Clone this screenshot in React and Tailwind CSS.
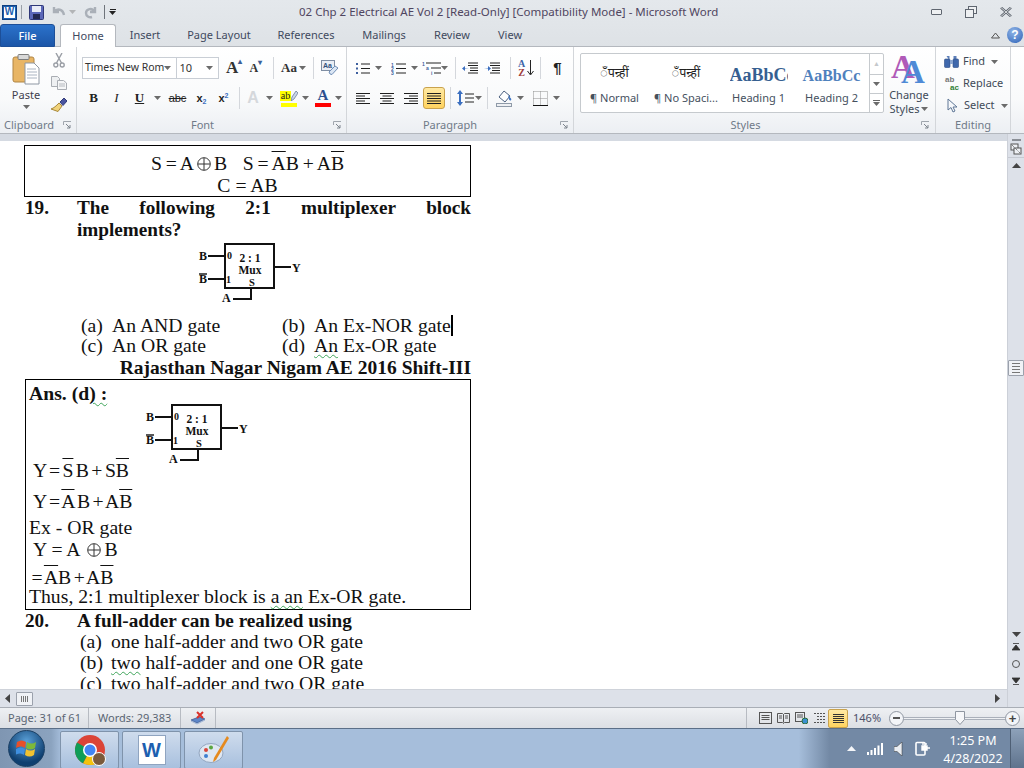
import React from 'react'

const Caret = ({ className = '' }) => (
  <svg width="7" height="4" viewBox="0 0 7 4" className={`shrink-0 ${className}`}><path d="M0 0h7L3.500 4z" fill="#6b6b6b" /></svg>
)

const Sep = () => <div className="w-px h-[22px] bg-[#d4d7dc] shrink-0" />

function Launcher() {
  return (
    <svg width="9" height="9" viewBox="0 0 9 9" className="shrink-0">
      <path d="M.5 4V.5H8M.5.5" stroke="#a0a6ae" fill="none" />
      <path d="M3 3l4 4M7 4v3H4" stroke="#7d848d" fill="none" />
    </svg>
  )
}

// lines for the paragraph buttons
function Lines({ kind }) {
  const rows = {
    left: [[1, 15], [1, 10], [1, 15], [1, 10], [1, 15]],
    center: [[1, 15], [3.5, 12.5], [1, 15], [3.5, 12.5], [1, 15]],
    right: [[1, 15], [6, 15], [1, 15], [6, 15], [1, 15]],
    justify: [[1, 15], [1, 15], [1, 15], [1, 15], [1, 15]],
  }[kind]
  return (
    <svg width="16" height="13" viewBox="0 0 16 13">
      {rows.map((r, i) => <path key={i} d={`M${r[0]} ${1.5 + i * 2.5}H${r[1]}`} stroke="#1f1f1f" />)}
    </svg>
  )
}

function PasteIcon() {
  return (
    <svg width="28" height="32" viewBox="0 0 28 32">
      <rect x="1" y="4" width="21" height="25" rx="2" fill="#e8b565" stroke="#b08545" />
      <rect x="6" y="1.500" width="11" height="5" rx="1" fill="#d9d9d9" stroke="#7d7d7d" />
      <path d="M13 10h9l5 5v16H13z" fill="#fff" stroke="#8e97a3" />
      <path d="M15 16h9M15 19h10M15 22h10M15 25h10" stroke="#aab4c2" />
    </svg>
  )
}

function ScissorsIcon() {
  return (
    <svg width="12" height="15" viewBox="0 0 12 15" fill="none" stroke="#9a9ea5" strokeWidth="1.400">
      <path d="M3 0l5.500 10M9 0L3.500 10" />
      <circle cx="2.800" cy="12" r="2" />
      <circle cx="9.200" cy="12" r="2" />
    </svg>
  )
}

function CopyIcon() {
  return (
    <svg width="16" height="14" viewBox="0 0 16 14">
      <path d="M.5.5h6l2 2v8h-8z" fill="#eef0f2" stroke="#a9adb3" />
      <path d="M6.500 4.500h6l3 2.500v6.500h-9z" fill="#f5f6f7" stroke="#a9adb3" />
      <path d="M8 8h6M8 10h6" stroke="#b5b9bf" />
    </svg>
  )
}

function PainterIcon() {
  return (
    <svg width="17" height="15" viewBox="0 0 17 15">
      <path d="M9 5l3 3-4 5.500-7-2.500C4 10 6 8 9 5z" fill="#f0d27a" stroke="#a8883a" />
      <path d="M10 4l4-4 3 3-4 4.500z" fill="#4a55a0" stroke="#333b78" />
    </svg>
  )
}

function ClearIcon() {
  return (
    <svg width="17" height="16" viewBox="0 0 17 16">
      <rect x=".5" y=".5" width="13" height="10" fill="#e9eef5" stroke="#7f8ea3" />
      <text x="2" y="8" fontSize="7" fontFamily="'Liberation Sans'" fontWeight="700" fill="#33517d">Aa</text>
      <path d="M8 12l6-6 3 2-6 6.500-2-.5z" fill="#dbe6f4" stroke="#6f8db5" />
    </svg>
  )
}

function Highlight() {
  return (
    <div className="w-[16px] flex flex-col items-center">
      <div className="flex h-[12px] items-center">
        <span className="bg-[#ffff00] text-[10px] leading-[10px] text-[#222] px-px">ab</span>
        <svg width="7" height="10" viewBox="0 0 7 10"><path d="M5 0l2 2-4 6-3 2 1-4z" fill="#c9d7ea" stroke="#5f6f8a" strokeWidth=".7" /></svg>
      </div>
      <div className="w-[16px] h-[4px] bg-[#ffff00] mt-[1px]" />
    </div>
  )
}

function FontColor() {
  return (
    <div className="w-[16px] flex flex-col items-center">
      <span className="font-['Liberation_Serif'] font-bold text-[15px] leading-[13px] text-[#2c4f8f]">A</span>
      <div className="w-[16px] h-[4px] bg-[#ff0000] mt-[1px]" />
    </div>
  )
}

function ListBullets() {
  return (
    <svg width="14" height="13" viewBox="0 0 14 13">
      <path d="M0 1h2v2H0zM0 5.500h2v2H0zM0 10h2v2H0z" fill="#3d5f9e" />
      <path d="M5 2h9M5 6.500h9M5 11h9" stroke="#222" />
    </svg>
  )
}

function ListNumbers() {
  const t = { fontSize: 5, fontWeight: 700, fill: '#3d5f9e', fontFamily: "'Liberation Sans'" }
  return (
    <svg width="15" height="13" viewBox="0 0 15 13">
      <text x="0" y="4.500" {...t}>1</text>
      <text x="0" y="8.700" {...t}>2</text>
      <text x="0" y="13" {...t}>3</text>
      <path d="M5 2h10M5 6.500h10M5 11h10" stroke="#222" />
    </svg>
  )
}

function ListMulti() {
  const t = { fontSize: 5, fontWeight: 700, fill: '#3d5f9e', fontFamily: "'Liberation Sans'" }
  return (
    <svg width="19" height="14" viewBox="0 0 19 14">
      <text x="0" y="4.500" {...t}>1</text>
      <text x="4" y="9" {...t}>a</text>
      <text x="9" y="14" {...t}>i</text>
      <path d="M4 2h15M9 7h10M12 12h7" stroke="#222" />
    </svg>
  )
}

function Indent({ flip }) {
  return (
    <svg width="16" height="13" viewBox="0 0 16 13">
      <path d="M6 1h10M6 3.500h10M8 6h8M8 8.500h8M6 11h10" stroke="#1f1f1f" />
      {flip
        ? <path d="M0 6.500h4V4l3 2.500L4 9V7z" fill="#3b6fc0" />
        : <path d="M7 6.500H3V4L0 6.500 3 9V7z" fill="#3b6fc0" />}
    </svg>
  )
}

function SortIcon() {
  return (
    <div className="flex items-center gap-[2px] h-[18px]">
      <div className="flex flex-col items-center font-['Liberation_Serif'] font-bold text-[10px] leading-[9px]">
        <span className="text-[#3c64a8]">A</span>
        <span className="text-[#a03c3c]">Z</span>
      </div>
      <svg width="7" height="16" viewBox="0 0 7 16"><path d="M3.500 0v14M.5 11l3 4 3-4" stroke="#222" fill="none" /></svg>
    </div>
  )
}

function LineSpacing() {
  return (
    <svg width="17" height="16" viewBox="0 0 17 16">
      <path d="M3 0l3 4H4v8h2l-3 4-3-4h2V4H0z" fill="#3b6fc0" />
      <path d="M8 4h9M8 8h9M8 12h9" stroke="#222" />
    </svg>
  )
}

function Shading() {
  return (
    <svg width="17" height="17" viewBox="0 0 17 17">
      <path d="M3 7l5-6 6 5-5 6z" fill="#fff" stroke="#4d6180" />
      <path d="M12 5l3 3.500c1 2 -1 3 -2 1z" fill="#3f75c4" />
      <rect x=".5" y="13.500" width="15" height="3" fill="#eef0f3" stroke="#8f9aa8" />
    </svg>
  )
}

function Borders() {
  return (
    <svg width="15" height="15" viewBox="0 0 15 15" fill="none">
      <path d="M.5 .5h14M.5 7.500h14M.5 .5v14M14.500 .5v14M7.500 .5v14" stroke="#8f8f8f" strokeDasharray="1 1" />
      <path d="M0 14.500h15" stroke="#111" />
    </svg>
  )
}

function ChangeStyles() {
  return (
    <svg width="38" height="31" viewBox="0 0 38 31">
      <text x="1" y="25" fontSize="33" fontFamily="'Liberation Serif'" fontWeight="700" fill="#b05ab8">A</text>
      <text x="11" y="30" fontSize="33" fontFamily="'Liberation Serif'" fontWeight="700" fill="#4f8ad6">A</text>
    </svg>
  )
}

function Binoculars() {
  return (
    <svg width="15" height="13" viewBox="0 0 15 13">
      <path d="M2.500 1h3v3h-1zM9.500 1h3l0 3h-3z" fill="#5d7fb8" />
      <rect x="0.500" y="4" width="5.500" height="8.500" rx="1" fill="#3f68ac" stroke="#2c4c85" strokeWidth=".6" />
      <rect x="9" y="4" width="5.500" height="8.500" rx="1" fill="#3f68ac" stroke="#2c4c85" strokeWidth=".6" />
      <rect x="6" y="5" width="3" height="4" fill="#8ba6d0" />
    </svg>
  )
}

function ReplaceIcon() {
  return (
    <div className="w-[16px] h-[16px] flex flex-col font-['Liberation_Sans'] font-bold text-[8px] leading-[8px]">
      <span className="text-[#777] ml-px">ab</span>
      <span className="text-[#2f7f34] ml-[6px]">ac</span>
    </div>
  )
}

function Arrow() {
  return (
    <svg width="11" height="15" viewBox="0 0 11 15"><path d="M1 1v11l3-2.500 2 4.500 2-1-2-4h4z" fill="#f6f8fb" stroke="#5f7796" /></svg>
  )
}

function StyleCard({ children, label, w }) {
  return (
    <div className={`flex flex-col items-center justify-between h-[52px] pt-[5px] pb-[3px] overflow-hidden shrink-0 ${w}`}>
      <div className="h-[24px] flex items-center">{children}</div>
      <span className="text-[11px] leading-[14px] text-[#45505e] whitespace-nowrap">{label}</span>
    </div>
  )
}

function Ribbon() {
  return (
    <div className="h-[87px] flex bg-[linear-gradient(#ffffff,#f9fafb_60%,#eceff3)] border-b border-[#b4b8be] text-[#444]">
      {/* Clipboard */}
      <div className="w-[77px] border-r border-[#d3d6da] flex flex-col">
        <div className="h-[71px] flex pt-[6px]">
          <div className="w-[50px] flex flex-col items-center pl-[2px]">
            <PasteIcon />
            <span className="text-[11px] leading-[14px] mt-[3px] text-[#3f3f4f]">Paste</span>
            <Caret className="mt-[3px]" />
          </div>
          <div className="flex flex-col items-center gap-[8px] w-[17px]">
            <ScissorsIcon />
            <CopyIcon />
            <PainterIcon />
          </div>
        </div>
        <div className="flex items-center pl-[4px] pr-[4px] justify-between text-[11px] text-[#6f7a88] h-[15px]">
          <span>Clipboard</span><Launcher />
        </div>
      </div>

      {/* Font */}
      <div className="w-[270px] border-r border-[#d3d6da] flex flex-col">
        <div className="h-[71px] pl-[5px] pt-[10px] flex flex-col">
          <div className="flex items-center h-[22px]">
            <div className="w-[98px] h-[22px] border border-[#c9ced5] bg-white flex items-center justify-between pl-[2px] pr-[5px] text-[10.500px] text-[#333] overflow-hidden">
              <span className="whitespace-nowrap">Times New Rom</span><Caret />
            </div>
            <div className="w-[43px] h-[22px] border border-l-0 border-[#c9ced5] bg-white flex items-center justify-between pl-[2px] pr-[5px] text-[11px] text-[#333]">
              <span>10</span><Caret />
            </div>
            <div className="w-[24px] flex justify-center ml-[3px] font-['Liberation_Serif'] font-bold text-[17px] leading-[20px] text-[#333]">A<span className="text-[8px] text-[#3b5f98] leading-[8px]">▴</span></div>
            <div className="w-[21px] flex justify-center font-['Liberation_Serif'] font-bold text-[12px] text-[#333]">A<span className="text-[8px] text-[#3b5f98] leading-[8px]">▾</span></div>
            <div className="ml-[7px]"><Sep /></div>
            <div className="w-[40px] flex justify-center items-center gap-[2px] font-['Liberation_Serif'] font-bold text-[13px] text-[#333]">Aa<Caret /></div>
            <Sep />
            <div className="w-[33px] flex justify-center"><ClearIcon /></div>
          </div>
          <div className="flex items-center h-[22px] mt-[8px] font-['Liberation_Serif'] text-[13px] text-[#222]">
            <div className="w-[23px] flex justify-center font-bold">B</div>
            <div className="w-[23px] flex justify-center italic">I</div>
            <div className="w-[23px] flex justify-center font-bold underline">U</div>
            <Caret className="mx-[3px]" />
            <div className="w-[27px] flex justify-center font-['Liberation_Sans'] text-[11px] line-through">abc</div>
            <div className="w-[21px] text-center font-['Liberation_Sans'] font-bold text-[11px]"><span>x<sub className="text-[7px] text-[#3b6fc0]">2</sub></span></div>
            <div className="w-[23px] text-center font-['Liberation_Sans'] font-bold text-[11px]"><span>x<sup className="text-[7px] text-[#3b6fc0]">2</sup></span></div>
            <div className="ml-[4px]"><Sep /></div>
            <div className="w-[26px] flex justify-center font-['Liberation_Sans'] font-bold text-[16px] text-[#d5d8dc]">A</div>
            <Caret className="mr-[8px]" />
            <Highlight />
            <Caret className="mx-[5px]" />
            <div className="ml-[1px]"><FontColor /></div>
            <Caret className="ml-[4px]" />
          </div>
        </div>
        <div className="flex items-center justify-center relative text-[11px] text-[#6f7a88] h-[15px] pr-[18px]">
          <span>Font</span>
          <span className="absolute right-[4px]"><Launcher /></span>
        </div>
      </div>

      {/* Paragraph */}
      <div className="w-[227px] border-r border-[#d3d6da] flex flex-col">
        <div className="h-[71px] pl-[9px] pt-[10px] flex flex-col">
          <div className="flex items-center h-[22px]">
            <ListBullets /><Caret className="ml-[5px]" />
            <div className="ml-[9px]"><ListNumbers /></div><Caret className="ml-[5px]" />
            <div className="ml-[4px]"><ListMulti /></div><Caret />
            <div className="ml-[7px]"><Sep /></div>
            <div className="ml-[6px]"><Indent /></div>
            <div className="ml-[6px]"><Indent flip /></div>
            <div className="ml-[10px]"><Sep /></div>
            <div className="ml-[7px]"><SortIcon /></div>
            <div className="ml-[6px]"><Sep /></div>
            <div className="ml-[12px] font-['Liberation_Sans'] font-bold text-[15px] text-[#222]">¶</div>
          </div>
          <div className="flex items-center h-[22px] mt-[8px]">
            <div className="ml-[-1px]"><Lines kind="left" /></div>
            <div className="ml-[8px]"><Lines kind="center" /></div>
            <div className="ml-[8px]"><Lines kind="right" /></div>
            <div className="ml-[4px] w-[22px] h-[22px] flex items-center justify-center bg-[linear-gradient(#ffe9a3,#ffd35f)] border border-[#c9a24d] rounded-[3px]"><Lines kind="justify" /></div>
            <div className="ml-[5px]"><Sep /></div>
            <div className="ml-[6px]"><LineSpacing /></div>
            <Caret className="ml-[1px]" />
            <div className="ml-[5px]"><Sep /></div>
            <div className="ml-[8px]"><Shading /></div>
            <Caret className="ml-[4px]" />
            <div className="ml-[9px]"><Borders /></div>
            <Caret className="ml-[5px]" />
          </div>
        </div>
        <div className="flex items-center justify-center relative text-[11px] text-[#6f7a88] h-[15px] pr-[20px]">
          <span>Paragraph</span>
          <span className="absolute right-[4px]"><Launcher /></span>
        </div>
      </div>

      {/* Styles */}
      <div className="w-[362px] border-r border-[#d3d6da] flex flex-col">
        <div className="h-[71px] flex pl-[6px] pt-[6px]">
          <div className="h-[60px] w-[304px] flex border border-[#c6cace] rounded-[2px] bg-white shrink-0">
            <div className="flex-1 flex pt-[2px] overflow-hidden">
              <StyleCard label="¶ Normal" w="w-[67px]"><span className="text-[12.500px] text-[#222]">ँपन्र्हीं</span></StyleCard>
              <StyleCard label="¶ No Spaci..." w="w-[76px]"><span className="text-[12.500px] text-[#222]">ँपन्र्हीं</span></StyleCard>
              <StyleCard label="Heading 1" w="w-[69px]"><span className="font-['Liberation_Serif'] font-bold text-[18px] text-[#365f91] whitespace-nowrap w-[58px] overflow-hidden mt-[5px]">AaBbCc</span></StyleCard>
              <StyleCard label="Heading 2" w="w-[77px]"><span className="font-['Liberation_Serif'] font-bold text-[16px] text-[#4f81bd] whitespace-nowrap mt-[5px]">AaBbCc</span></StyleCard>
            </div>
            <div className="w-[14px] border-l border-[#c6cace] flex flex-col">
              <div className="h-[20px] flex items-center justify-center text-[#c5c8cc] text-[7px]">▲</div>
              <div className="h-[20px] flex items-center justify-center border-y border-[#c6cace]"><Caret /></div>
              <div className="flex-1 flex flex-col items-center justify-center gap-px"><div className="w-[7px] h-px bg-[#666]" /><Caret /></div>
            </div>
          </div>
          <div className="w-[50px] flex flex-col items-center">
            <ChangeStyles />
            <span className="text-[11px] leading-[14px] mt-[4px] text-[#3f4a58]">Change</span>
            <span className="text-[11px] leading-[13px] text-[#3f4a58] flex items-center gap-[2px]">Styles<Caret /></span>
          </div>
        </div>
        <div className="flex items-center justify-center relative text-[11px] text-[#6f7a88] h-[15px] pr-[18px]">
          <span>Styles</span>
          <span className="absolute right-[5px]"><Launcher /></span>
        </div>
      </div>

      {/* Editing */}
      <div className="w-[75px] border-r border-[#d3d6da] flex flex-col">
        <div className="h-[71px] flex flex-col pl-[8px] pt-[6px] text-[11px] text-[#3f4a58] gap-[5px]">
          <div className="h-[17px] flex items-center gap-[4px]"><Binoculars /><span>Find</span><Caret className="ml-[2px]" /></div>
          <div className="h-[17px] flex items-center gap-[3px]"><ReplaceIcon /><span>Replace</span></div>
          <div className="h-[17px] flex items-center gap-[6px] pl-[3px]"><Arrow /><span>Select</span><Caret /></div>
        </div>
        <div className="flex items-center justify-center text-[11px] text-[#6f7a88] h-[15px]">Editing</div>
      </div>
    </div>
  )
}

const Tab = ({ children, w }) => (
  <div className={`text-[11px] text-[#3f4a5e] flex items-center justify-center pt-px ${w}`}>{children}</div>
)

function TitleBar() {
  return (
    <div className="h-[24px] flex items-center">
      <div className="w-[15px] h-[15px] ml-[2px] bg-[#1d5fb0] border border-[#0e3f80] flex items-center justify-center">
        <span className="bg-white w-[11px] h-[11px] flex items-center justify-center font-['Liberation_Sans'] font-bold text-[10px] leading-none text-[#1d5fb0]">W</span>
      </div>
      <div className="w-px h-[14px] bg-[#9aa0a8] ml-[4px]" />
      <svg width="15" height="15" viewBox="0 0 15 15" className="ml-[7px]">
        <rect x=".5" y=".5" width="14" height="14" rx="1" fill="#5b67b8" stroke="#2f3878" />
        <rect x="3" y="1" width="9" height="6" fill="#e9ecf7" />
        <rect x="4" y="9" width="7" height="5" fill="#23284f" />
      </svg>
      <svg width="15" height="14" viewBox="0 0 15 14" fill="none" className="ml-[7px]">
        <path d="M3 2v5h5M3 7c3-4 9-3 10 3" stroke="#aab0b8" strokeWidth="2.400" />
      </svg>
      <Caret className="ml-[3px] opacity-40" />
      <svg width="14" height="14" viewBox="0 0 14 14" fill="none" className="ml-[8px]">
        <path d="M11 2v5H6M11 7C8 2 2 4 2 8c0 3 3 5 6 4" stroke="#aab0b8" strokeWidth="2.400" />
      </svg>
      <div className="w-px h-[14px] bg-[#6f747b] ml-[6px]" />
      <div className="ml-[4px] flex flex-col items-center gap-[1px]"><div className="w-[6px] h-px bg-[#222]" /><svg width="7" height="4" viewBox="0 0 7 4"><path d="M0 0h7L3.500 4z" fill="#222" /></svg></div>
      <div className="ml-[183px] text-[11.500px] text-[#4f4560] whitespace-nowrap w-[424px]">02 Chp 2 Electrical AE Vol 2 [Read-Only] [Compatibility Mode]  -  Microsoft Word</div>
      <div className="ml-auto flex items-center">
        <div className="w-[11px] h-[6px] rounded-[1px] border border-[#5f6670] bg-[#eef0f2] mr-[23px]" />
        <svg width="12" height="12" viewBox="0 0 12 12" fill="#eef0f2" stroke="#5f6670" className="mr-[23px]">
          <rect x="3.500" y=".5" width="8" height="7" /><rect x=".5" y="3.500" width="8" height="8" />
        </svg>
        <svg width="12" height="10" viewBox="0 0 12 10" className="mr-[12px]" fill="none">
          <path d="M1 .5l10 9M11 .5l-10 9" stroke="#5f6670" strokeWidth="2.400" />
          <path d="M1 .5l10 9M11 .5l-10 9" stroke="#f4f5f6" strokeWidth=".8" />
        </svg>
      </div>
    </div>
  )
}

function TabsRow() {
  return (
    <div className="h-[23px] flex border-b border-[#b4b8be]">
      <div className="w-[55px] h-[23px] rounded-t-[3px] bg-[linear-gradient(#2b72cb,#1c56a8)] border border-[#1d4f98] text-white text-[11px] font-medium flex items-center justify-center pt-px">File</div>
      <div className="ml-[5px] w-[56px] h-[23px] bg-white border border-b-0 border-[#b4b8be] rounded-t-[3px] text-[11px] text-[#3f4a5e] flex items-center justify-center pt-px relative z-10">Home</div>
      <Tab w="w-[58px]">Insert</Tab>
      <Tab w="w-[86px] ml-[2px]">Page Layout</Tab>
      <Tab w="w-[80px] ml-[4px]">References</Tab>
      <Tab w="w-[76px]">Mailings</Tab>
      <Tab w="w-[60px]">Review</Tab>
      <Tab w="w-[56px]">View</Tab>
      <div className="ml-auto flex items-center pr-[1px]">
        <svg width="9" height="7" viewBox="0 0 9 7" fill="none" className="mr-[7px]"><path d="M.5 6L4.500 1l4 5z" stroke="#555" /></svg>
        <div className="w-[16px] h-[16px] rounded-full bg-[radial-gradient(circle_at_40%_30%,#8fb4e6,#2d62b8)] text-white font-['Liberation_Sans'] font-bold text-[12px] flex items-center justify-center">?</div>
      </div>
    </div>
  )
}

function Bar({ children }) {
  return <span className="overline decoration-1">{children}</span>
}

function Squiggle({ children }) {
  return <span className="underline decoration-wavy decoration-1 decoration-[#3fa55a] underline-offset-2">{children}</span>
}

function Xor() {
  return (
    <svg width="14" height="14" viewBox="0 0 14 14" className="inline-block mx-[3px] align-[-1px]" fill="none" stroke="#333">
      <circle cx="7" cy="7" r="6.300" /><path d="M7 1v12M1 7h12" />
    </svg>
  )
}

function Mux() {
  const t = { fontFamily: "'Liberation Serif'", fontWeight: 700, fill: '#111' }
  return (
    <svg width="106" height="62" viewBox="0 0 106 62" className="block">
      <rect x="28" y="3" width="49" height="44" fill="#fff" stroke="#111" strokeWidth="2" />
      <path d="M11 15h17M11 38h17M77 26h17M54 47v11H36" stroke="#111" strokeWidth="2" fill="none" />
      <text x="2" y="19" fontSize="12" {...t}>B</text>
      <text x="2" y="42" fontSize="12" {...t}>B</text>
      <path d="M2 33h8" stroke="#111" strokeWidth="1.400" />
      <text x="95" y="31" fontSize="12" {...t}>Y</text>
      <text x="30" y="18" fontSize="10" {...t}>0</text>
      <text x="29" y="42" fontSize="10" {...t}>1</text>
      <text x="53" y="21" fontSize="11.500" textAnchor="middle" {...t}>2 : 1</text>
      <text x="53" y="33" fontSize="11.500" textAnchor="middle" {...t}>Mux</text>
      <text x="55" y="45" fontSize="10.500" textAnchor="middle" {...t}>S</text>
      <text x="25" y="61" fontSize="12" {...t}>A</text>
    </svg>
  )
}

const Row = ({ className = '', children }) => (
  <div className={`flex items-center whitespace-nowrap ${className}`}>{children}</div>
)

// a run of text on one line, spaces kept as they are
const Line = ({ className = '', children }) => (
  <div className={`whitespace-pre ${className}`}>{children}</div>
)

function Option({ tag, children, className = '' }) {
  return (
    <Row className={`h-[21px] ${className}`}>
      <span className="w-[31px] ml-[56px]">{tag}</span>
      <span>{children}</span>
    </Row>
  )
}

function Page() {
  return (
    <div className="w-[447px] ml-[24px] pt-[4px] font-['Liberation_Serif',serif] text-[19.700px] text-[#111]">
      <div className="h-[52px] border border-black flex flex-col items-center pt-[6px]">
        <Line className="h-[22px] leading-[22px] [word-spacing:-1px]">S = A<Xor />B    S = <Bar>A</Bar>B + A<Bar>B</Bar></Line>
        <Line className="h-[22px] leading-[22px]">C = AB</Line>
      </div>
      <div className="font-bold text-[19.200px]">
        <Row className="h-[22px]">
          <span className="w-[53px] pl-px">19.</span>
          <span className="flex-1 flex justify-between"><span>The</span><span>following</span><span>2:1</span><span>multiplexer</span><span>block</span></span>
        </Row>
        <Row className="h-[22px] pl-[53px]">implements?</Row>
      </div>
      <div className="h-[73px] pl-[173px]"><Mux /></div>
      <Row className="h-[21px] mt-px">
        <span className="w-[31px] ml-[57px]">(a)</span>
        <span className="w-[170px]">An AND gate</span>
        <span className="w-[32px]">(b)</span>
        <span className="border-r-2 border-black h-[21px] leading-[21px]">An Ex-NOR gate</span>
      </Row>
      <Row className="h-[21px] -mt-px">
        <span className="w-[31px] ml-[57px]">(c)</span>
        <span className="w-[170px]">An OR gate</span>
        <span className="w-[32px]">(d)</span>
        <span><Squiggle>An</Squiggle> Ex-OR gate</span>
      </Row>
      <Row className="h-[22px] mt-px justify-end font-bold text-[19.500px]">Rajasthan Nagar Nigam AE 2016 Shift-III</Row>

      <div className="h-[231px] border border-black ml-px pl-[3px]">
        <Line className="h-[26px] leading-[26px] font-bold">Ans. (d<Squiggle>) :</Squiggle></Line>
        <div className="h-[57px] pl-[115px]"><div className="-mt-[4px]"><Mux /></div></div>
        <Line className="h-[22px] leading-[22px] pl-[4px] [word-spacing:-2.500px]">Y = <Bar>S</Bar> B + S<Bar>B</Bar></Line>
        <Line className="h-[22px] leading-[22px] pl-[4px] mt-[9px] [word-spacing:-2.500px]">Y = <Bar>A</Bar> B + A<Bar>B</Bar></Line>
        <Line className="h-[22px] leading-[22px] mt-[4px]">Ex - OR gate</Line>
        <Line className="h-[22px] leading-[22px] pl-[4px]">Y = A <Xor />B</Line>
        <Line className="h-[22px] leading-[22px] mt-[6px] [word-spacing:-2.500px]"> = <Bar>A</Bar>B + A<Bar>B</Bar></Line>
        <Line className="h-[20px] leading-[20px] -mt-[2px]">Thus, 2:1 multiplexer block is <Squiggle>a an</Squiggle> Ex-OR gate.</Line>
      </div>

      <Row className="h-[22px] font-bold text-[19.200px]">
        <span className="w-[53px] pl-px">20.</span>
        <span>A full-adder can be realized using</span>
      </Row>
      <Option tag="(a)" className="-mt-px">one half-adder and two OR gate</Option>
      <Option tag="(b)"><Squiggle>two</Squiggle> half-adder and one OR gate</Option>
      <Option tag="(c)">two half-adder and two OR gate</Option>
    </div>
  )
}

function VScroll() {
  return (
    <div className="w-[17px] bg-[#dde1e9] flex flex-col items-center border-l border-[#ccd0d8]">
      <div className="w-[9px] h-[2px] bg-[#8b8f96] mt-[5px]" />
      <svg width="12" height="12" viewBox="0 0 12 12" fill="#eef0f4" stroke="#555" className="mt-[2px]">
        <rect x="1" y="1" width="7" height="6" /><rect x="4" y="5" width="7" height="6" />
        <path d="M2 2l8 8" strokeDasharray="1 1" />
      </svg>
      <div className="w-full h-px bg-[#c6cad2] mt-[2px]" />
      <svg width="9" height="5" viewBox="0 0 9 5" className="mt-[5px]"><path d="M0 5L4.500 0 9 5z" fill="#444" /></svg>
      <div className="w-[16px] h-[16px] mt-[192px] bg-[#f0f2f6] border border-[#9ba1ac] rounded-[1px] flex flex-col items-center justify-center gap-[2px]">
        <div className="w-[8px] h-px bg-[#777]" /><div className="w-[8px] h-px bg-[#777]" /><div className="w-[8px] h-px bg-[#777]" /><div className="w-[8px] h-px bg-[#777]" />
      </div>
      <svg width="9" height="5" viewBox="0 0 9 5" className="mt-auto mb-[6px]"><path d="M0 0L4.500 5 9 0z" fill="#444" /></svg>
      <svg width="8" height="8" viewBox="0 0 8 8" className="mb-[9px]"><path d="M1 .5h6M0 7l4-5 4 5z" stroke="#333" fill="#333" strokeWidth=".8" /></svg>
      <div className="w-[8px] h-[8px] rounded-full border border-[#555] mb-[9px]" />
      <svg width="8" height="8" viewBox="0 0 8 8" className="mb-[22px]"><path d="M1 7.500h6M0 1l4 5 4-5z" stroke="#333" fill="#333" strokeWidth=".8" /></svg>
    </div>
  )
}

function HScroll() {
  return (
    <div className="h-[18px] w-[1007px] bg-[#dde1e9] flex items-center border-t border-[#cfd3da] pl-[5px]">
      <svg width="6" height="9" viewBox="0 0 6 9"><path d="M5 0L0 4.500 5 9z" fill="#444" /></svg>
      <div className="w-[17px] h-[14px] ml-[5px] bg-[#f0f2f6] border border-[#9ba1ac] rounded-[1px] flex items-center justify-center gap-[1px]">
        <div className="w-px h-[6px] bg-[#777]" /><div className="w-px h-[6px] bg-[#777]" /><div className="w-px h-[6px] bg-[#777]" /><div className="w-px h-[6px] bg-[#777]" />
      </div>
      <svg width="6" height="9" viewBox="0 0 6 9" className="ml-auto mr-[6px]"><path d="M0 0l5 4.500L0 9z" fill="#444" /></svg>
    </div>
  )
}

function ViewIcon({ kind }) {
  return (
    <svg width="13" height="12" viewBox="0 0 13 12" fill="none" stroke="#555">
      {kind === 'print' && <><rect x=".5" y=".5" width="12" height="11" /><path d="M2.500 3.500h8M2.500 5.500h8M2.500 7.500h8" /></>}
      {kind === 'read' && <path d="M.5 1.500h5l1 1 1-1h5v9h-5l-1 1-1-1h-5zM6.500 2.500v8M2 4h3M2 6h3M8 4h3M8 6h3" />}
      {kind === 'web' && <><rect x=".5" y=".5" width="9" height="9" /><path d="M2 3h6M2 5h6" /><circle cx="10" cy="9" r="3" fill="#3a8fd0" stroke="#2f6f3a" /></>}
      {kind === 'outline' && <path d="M1 1.500h11M4 4.500h8M4 7.500h8M1 10.500h11" strokeDasharray="2 1" />}
    </svg>
  )
}

function StatusBar() {
  return (
    <div className="h-[21px] flex items-center bg-[linear-gradient(#eef0f3,#dcdfe4)] border-t border-[#a9aeb6] text-[11px] text-[#5a6573]">
      <span className="w-[89px] h-full border-r border-[#b7bbc2] pl-[8px] flex items-center">Page: 31 of 61</span>
      <span className="w-[92px] h-full border-r border-[#b7bbc2] pl-[9px] flex items-center">Words: 29,383</span>
      <div className="w-[35px] h-full border-r border-[#b7bbc2] flex items-center justify-center">
        <svg width="16" height="15" viewBox="0 0 16 15">
          <path d="M1 9l8-3 6 2-8 4z" fill="#5e86c8" stroke="#2f4f88" strokeWidth=".7" />
          <path d="M1 10l6 3 8-4" fill="none" stroke="#9fb4d6" />
          <path d="M7 1l6 6M13 1L7 7" stroke="#d9302a" strokeWidth="2" />
        </svg>
      </div>
      <div className="ml-[530px] w-px h-full bg-[#b7bbc2]" />
      <div className="w-[9px]" />
      <div className="w-[18px] flex justify-center"><ViewIcon kind="print" /></div>
      <div className="w-[18px] flex justify-center"><ViewIcon kind="read" /></div>
      <div className="w-[18px] flex justify-center"><ViewIcon kind="web" /></div>
      <div className="w-[18px] flex justify-center"><ViewIcon kind="outline" /></div>
      <div className="w-[20px] h-[19px] bg-[linear-gradient(#ffe9a3,#ffd35f)] border border-[#c9a24d] rounded-[2px] flex items-center justify-center">
        <div className="flex flex-col gap-[1px]">
          <div className="w-[11px] h-px bg-[#333]" /><div className="w-[11px] h-px bg-[#333]" /><div className="w-[11px] h-px bg-[#333]" /><div className="w-[11px] h-px bg-[#333]" /><div className="w-[11px] h-px bg-[#333]" />
        </div>
      </div>
      <span className="ml-[5px] w-[27px] text-[#4c4f68]">146%</span>
      <div className="ml-[9px] w-[15px] h-[15px] rounded-full border border-[#8f96a1] bg-[#f3f5f8] flex items-center justify-center"><div className="w-[7px] h-[2px] bg-[#555]" /></div>
      <div className="w-[101px] h-[3px] flex items-center border-y border-[#aab0ba] bg-[#eef0f3] justify-center pl-[10px]">
        <svg width="10" height="14" viewBox="0 0 10 14" className="overflow-visible"><path d="M.5 .5h9v8L5 13.500.5 8.500z" fill="#f6f7f9" stroke="#8f96a1" /></svg>
      </div>
      <div className="w-[15px] h-[15px] rounded-full border border-[#8f96a1] bg-[#f3f5f8] flex items-center justify-center text-[#444] font-bold font-['Liberation_Sans'] text-[13px] leading-none">+</div>
    </div>
  )
}

function TaskButton({ children }) {
  return (
    <div className="w-[59px] h-[38px] mt-[2px] bg-[linear-gradient(#cfdced,#a8c0de)] border border-[#7f93ab] rounded-[2px] flex items-center justify-center">
      {children}
    </div>
  )
}

function Taskbar() {
  return (
    <div className="h-[40px] flex items-start border-t border-[#5b6f88] bg-[linear-gradient(90deg,#7f96b2_0,#8ba3bf_5%,#a6bedb_6%,#a6bedb_78%,#7389a5_81%,#7389a5_100%)]">
      <div className="w-[60px] h-full flex items-center pl-[8px]">
        <div className="w-[37px] h-[37px] rounded-full bg-[radial-gradient(circle_at_50%_30%,#5aa0d8,#0f3f70_70%)] border border-[#1c4064] flex items-center justify-center">
          <svg width="21" height="19" viewBox="0 0 21 19">
            <path d="M1 3c3-2 6-2 9 0l-1 6C6 7 4 7 0 9z" fill="#e8502a" />
            <path d="M11 3c3 2 6 2 9 0l-1 6c-3 2-6 2-9 0z" fill="#7db93a" />
            <path d="M0 10c3-2 6-2 9 0l-1 6c-3-2-5-2-9 0z" fill="#3f8fe0" />
            <path d="M10 10c3 2 6 2 9 0l-1 6c-3 2-6 2-9 0z" fill="#f2c230" />
          </svg>
        </div>
      </div>
      <div className="flex gap-[3px]">
        <TaskButton>
          <svg width="32" height="32" viewBox="0 0 32 32">
            <circle cx="16" cy="16" r="15" fill="#db4437" />
            <path d="M16 16L29 23.500A15 15 0 0 1 9 29.300z" fill="#f4c20d" />
            <path d="M16 16L9 29.300A15 15 0 0 1 3 8.500z" fill="#0f9d58" />
            <circle cx="16" cy="16" r="7" fill="#fff" /><circle cx="16" cy="16" r="5.500" fill="#4285f4" />
            <circle cx="25" cy="25" r="6.500" fill="#7a5a3c" stroke="#fff" />
          </svg>
        </TaskButton>
        <TaskButton>
          <div className="w-[28px] h-[30px] bg-white border border-[#8fa4c0] flex items-center justify-center">
            <span className="font-['Liberation_Sans'] font-bold text-[20px] leading-none text-[#1d5fb0]">W</span>
          </div>
        </TaskButton>
        <TaskButton>
          <svg width="32" height="30" viewBox="0 0 32 30">
            <ellipse cx="13" cy="18" rx="12" ry="9.500" fill="#dfe7f2" stroke="#93a6c0" />
            <circle cx="8" cy="15" r="2" fill="#d9453a" /><circle cx="13" cy="12.500" r="2" fill="#5aa640" /><circle cx="8" cy="21" r="2" fill="#3f7fd0" />
            <path d="M29 1l2 2-13 22-3 2 1-4z" fill="#e58a1f" />
          </svg>
        </TaskButton>
      </div>
      <div className="ml-auto h-full flex items-center text-white">
        <svg width="9" height="5" viewBox="0 0 9 5"><path d="M0 5L4.500 0 9 5z" fill="#f4f6f9" /></svg>
        <svg width="16" height="12" viewBox="0 0 16 12" className="ml-[11px]" fill="#fff">
          <path d="M0 9h2v3H0zM3.500 7h2v5h-2zM7 5h2v7H7zM10.500 2.500h2V12h-2zM14 0h2v12h-2z" />
        </svg>
        <svg width="9" height="14" viewBox="0 0 9 14" className="ml-[11px]"><path d="M0 4.500h3L8 0v14L3 9.500H0z" fill="#e9edf2" stroke="#333" strokeWidth=".5" /></svg>
        <svg width="15" height="15" viewBox="0 0 15 15" className="ml-[12px]" fill="none">
          <rect x="1" y="1.500" width="9" height="12.500" rx="1" stroke="#fff" strokeWidth="1.600" />
          <path d="M7 5h5v4H7zM12 7h3M8 4V2M11 4V2" stroke="#fff" strokeWidth="1.400" fill="#fff" />
        </svg>
        <div className="w-[72px] ml-[7px] flex flex-col items-center text-[12.500px] leading-[18px] pt-[2px]">
          <span>1:25 PM</span><span>4/28/2022</span>
        </div>
        <div className="w-[14px] h-full ml-px border-l border-[#4e5f74] bg-[linear-gradient(#8da1b9,#5f738d)]" />
      </div>
    </div>
  )
}

export default function App() {
  return (
    <div className="w-[1024px] h-[768px] overflow-hidden flex flex-col font-['Noto_Sans','Open_Sans',sans-serif] bg-[#dfe3e8]">
      <div className="bg-[linear-gradient(#e4e8ec,#dee2e6)]">
        <TitleBar />
        <TabsRow />
      </div>
      <Ribbon />
      <div className="h-[573px] flex bg-[#d5dae2]">
        <div className="w-[1007px] flex flex-col">
          <div className="h-[7px] shrink-0" />
          <div className="h-[548px] bg-white overflow-hidden">
            <Page />
          </div>
          <HScroll />
        </div>
        <VScroll />
      </div>
      <StatusBar />
      <Taskbar />
    </div>
  )
}
